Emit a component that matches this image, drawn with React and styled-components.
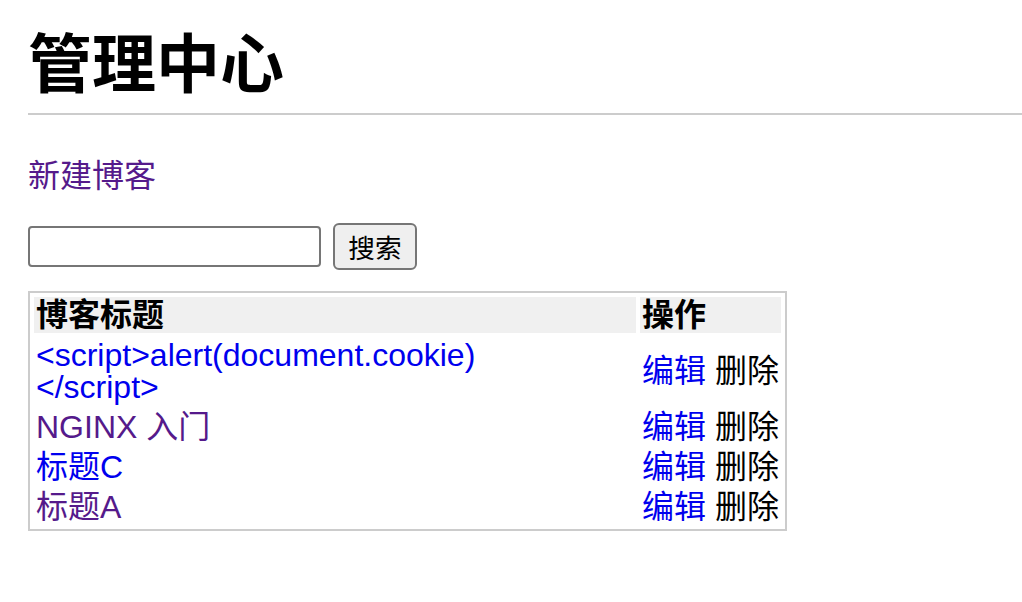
import styled, { createGlobalStyle } from "styled-components";

const blogs = [
  { id: 1, title: ["<script>alert(document.cookie)", "</script>"], visited: false },
  { id: 2, title: ["NGINX 入门"], visited: true },
  { id: 3, title: ["标题C"], visited: false },
  { id: 4, title: ["标题A"], visited: true },
];

const App = () => {
  return (
    <Wrap>
      <GlobalStyle />
      <Title>管理中心</Title>
      <Line />

      <NewLink href="#new">新建博客</NewLink>

      <SearchForm
        onSubmit={(e) => {
          e.preventDefault();
        }}
      >
        <SearchInput type="text" />
        <SearchButton>搜索</SearchButton>
      </SearchForm>

      <Table>
        <thead>
          <tr>
            <Th>博客标题</Th>
            <Th $narrow>操作</Th>
          </tr>
        </thead>
        <tbody>
          {blogs.map((blog) => (
            <tr key={blog.id}>
              <Td>
                <BlogLink href={`#blog-${blog.id}`} $visited={blog.visited}>
                  {blog.title.map((line, i) => (
                    <span key={i}>
                      {i > 0 && <br />}
                      {line}
                    </span>
                  ))}
                </BlogLink>
              </Td>
              <Td $nowrap>
                <BlogLink href={`#edit-${blog.id}`}>编辑</BlogLink> <Delete>删除</Delete>
              </Td>
            </tr>
          ))}
        </tbody>
      </Table>
    </Wrap>
  );
};

const GlobalStyle = createGlobalStyle`
  body {
    margin: 0;
    background: #fff;
    font-family: "Liberation Sans", "Noto Sans CJK SC", sans-serif;
    font-size: 32px;
    color: #000;
  }
`;

const Wrap = styled.div`
  padding: 33px 0 40px 28px;
`;

const Title = styled.h1`
  margin: 0;
  font-size: 64px;
  line-height: 64px;
  font-weight: bold;
`;

const Line = styled.hr`
  margin: 16px 0 0 0;
  height: 2px;
  border: 0;
  background: #cccccc;
`;

const NewLink = styled.a`
  display: block;
  width: max-content;
  margin-top: 43px;
  line-height: 36px;
  color: #551a8b;
  text-decoration: none;
`;

const SearchForm = styled.form`
  display: flex;
  align-items: center;
  margin-top: 29px;
`;

const SearchInput = styled.input`
  box-sizing: border-box;
  width: 293px;
  height: 41px;
  margin: 0;
  border: 2px solid #767676;
  border-radius: 4px;
  font-size: 26px;
  font-family: inherit;
  padding: 0 4px;
`;

const SearchButton = styled.button`
  box-sizing: border-box;
  width: 84px;
  height: 47px;
  margin: 0 0 0 12px;
  padding: 0;
  border: 2px solid #767676;
  border-radius: 6px;
  background: #efefef;
  color: #000;
  font-family: inherit;
  font-size: 26.67px;
`;

const Table = styled.table`
  margin-top: 21px;
  width: 759px;
  border: 2px solid #cccccc;
  border-collapse: separate;
  border-spacing: 4px;
`;

const Th = styled.th`
  padding: 2px;
  background: #f0f0f0;
  text-align: left;
  font-weight: bold;
  line-height: 32px;
  width: ${(p) => (p.$narrow ? "136px" : "auto")};
`;

const Td = styled.td`
  padding: 2px;
  line-height: 32px;
  vertical-align: middle;
  white-space: ${(p) => (p.$nowrap ? "nowrap" : "normal")};
`;

const BlogLink = styled.a`
  color: ${(p) => (p.$visited ? "#551a8b" : "#0000ee")};
  text-decoration: none;
`;

const Delete = styled.span`
  color: #000;
`;

export default App;
